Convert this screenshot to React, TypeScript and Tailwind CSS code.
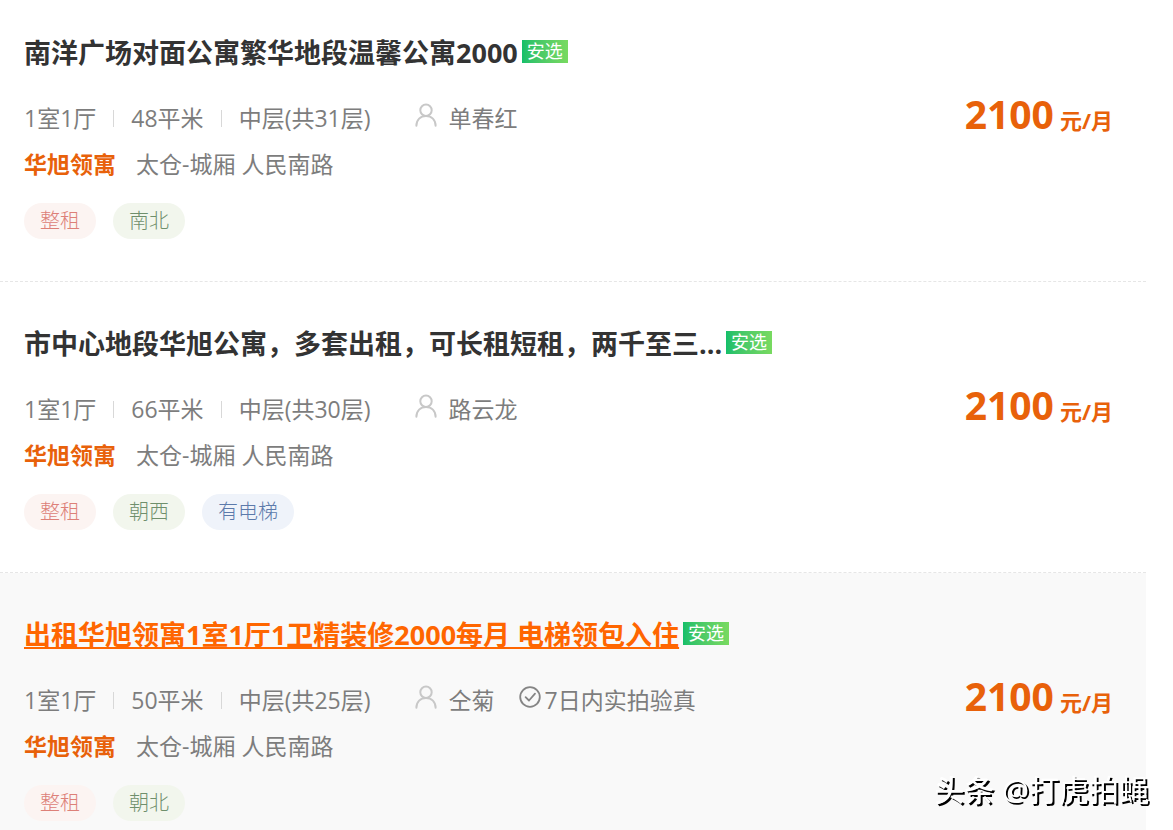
import React from 'react';
import clsx from 'clsx';

interface Tag {
  label: string;
  tone: 'red' | 'green' | 'blue';
}

interface Listing {
  id: number;
  title: string;
  layout: string;
  area: string;
  floor: string;
  agent: string;
  verified?: string;
  community: string;
  address: string;
  tags: Tag[];
  price: number;
  active?: boolean;
}

const listings: Listing[] = [
  {
    id: 1,
    title: '南洋广场对面公寓繁华地段温馨公寓2000',
    layout: '1室1厅',
    area: '48平米',
    floor: '中层(共31层)',
    agent: '单春红',
    community: '华旭领寓',
    address: '太仓-城厢 人民南路',
    tags: [
      { label: '整租', tone: 'red' },
      { label: '南北', tone: 'green' }
    ],
    price: 2100
  },
  {
    id: 2,
    title: '市中心地段华旭公寓，多套出租，可长租短租，两千至三...',
    layout: '1室1厅',
    area: '66平米',
    floor: '中层(共30层)',
    agent: '路云龙',
    community: '华旭领寓',
    address: '太仓-城厢 人民南路',
    tags: [
      { label: '整租', tone: 'red' },
      { label: '朝西', tone: 'green' },
      { label: '有电梯', tone: 'blue' }
    ],
    price: 2100
  },
  {
    id: 3,
    title: '出租华旭领寓1室1厅1卫精装修2000每月 电梯领包入住',
    layout: '1室1厅',
    area: '50平米',
    floor: '中层(共25层)',
    agent: '仝菊',
    verified: '7日内实拍验真',
    community: '华旭领寓',
    address: '太仓-城厢 人民南路',
    tags: [
      { label: '整租', tone: 'red' },
      { label: '朝北', tone: 'green' }
    ],
    price: 2100,
    active: true
  }
];

const tagTones = {
  red: 'bg-[#fcf4f2] text-[#dd8078]',
  green: 'bg-[#f2f6ed] text-[#6f8f6c]',
  blue: 'bg-[#eff3fa] text-[#5c7aab]'
};

const PersonIcon = () => (
  <svg width="22" height="24" viewBox="0 0 22 24" fill="none" stroke="#c8c8c8" strokeWidth="2" strokeLinecap="round">
    <circle cx="11" cy="7.2" r="5.7" />
    <path d="M1.4 22.8c0-6 4-9.9 9.6-9.9s9.6 3.9 9.6 9.9" />
  </svg>
);

const VerifiedIcon = () => (
  <svg width="22" height="22" viewBox="0 0 22 22" fill="none" stroke="#858585" strokeWidth="1.8" strokeLinecap="round" strokeLinejoin="round">
    <circle cx="11" cy="11" r="9.8" />
    <path d="M6.6 11.2l3.4 3.3 6-6.9" />
  </svg>
);

const Divider = () => <span className="mx-[17px] h-[17px] w-px bg-[#d8d8d8]" />;

const ListingRow: React.FC<{ item: Listing }> = ({ item }) => (
  <li
    className={clsx(
      'flex items-start justify-between border-b border-dashed border-[#e6e6e6] pt-[42px] pr-[33px] pb-[42px] pl-6 first:pt-[33px] last:grow last:border-b-0 last:pb-2',
      item.active && 'bg-[#f9f9f9]'
    )}
  >
    <div>
      {/* Title */}
      <div className="flex items-start">
        <h3 className="text-[27px] leading-[40px] font-bold">
          <a
            href="#"
            className={clsx(
              item.active
                ? 'text-[#ff6600] underline decoration-2 underline-offset-2'
                : 'text-[#333333]'
            )}
          >
            {item.title}
          </a>
        </h3>
        <span className="mt-[7px] ml-1 bg-linear-to-r from-[#12bf6a] to-[#78da60] px-[5px] text-lg leading-[23px] text-white">
          安选
        </span>
      </div>

      {/* Layout, area, floor and agent */}
      <div className="mt-[22px] flex items-center leading-[46px]">
        <span>{item.layout}</span>
        <Divider />
        <span>{item.area}</span>
        <Divider />
        <span>{item.floor}</span>
        <span className="ml-11 flex items-center gap-3">
          <span className="pb-[6px]">
            <PersonIcon />
          </span>
          {item.agent}
        </span>
        {item.verified && (
          <span className="ml-6 flex items-center gap-1">
            <span className="pb-[6px]">
              <VerifiedIcon />
            </span>
            {item.verified}
          </span>
        )}
      </div>

      {/* Location */}
      <p className="leading-[47px]">
        <a href="#" className="mr-5 font-bold text-[#e8610a]">{item.community}</a>
        {item.address}
      </p>

      <div className="mt-[15px] flex gap-[17px]">
        {item.tags.map((tag) => (
          <span
            key={tag.label}
            className={clsx('rounded-full px-4 text-xl leading-9 font-light', tagTones[tag.tone])}
          >
            {tag.label}
          </span>
        ))}
      </div>
    </div>

    {/* Price */}
    <p className="pt-[58px] text-[22px] leading-[46px] font-bold whitespace-nowrap text-[#e8610a]">
      <span className="mr-[6px] text-[39px]">{item.price}</span>
      元/月
    </p>
  </li>
);

export default function App() {
  return (
    <div className="min-h-screen bg-white pr-[27px] font-['Open_Sans','Noto_Sans_CJK_SC',sans-serif] text-[23px] text-[#7d7d7d]">
      <ul className="flex min-h-screen flex-col">
        {listings.map((item) => (
          <ListingRow key={item.id} item={item} />
        ))}
      </ul>

      <div className="fixed right-6 bottom-[18px] text-[30px] leading-[44px] text-white [text-shadow:2px_2px_0_#000]">
        <span className="font-medium">头条</span> @打虎拍蝇
      </div>
    </div>
  );
}
